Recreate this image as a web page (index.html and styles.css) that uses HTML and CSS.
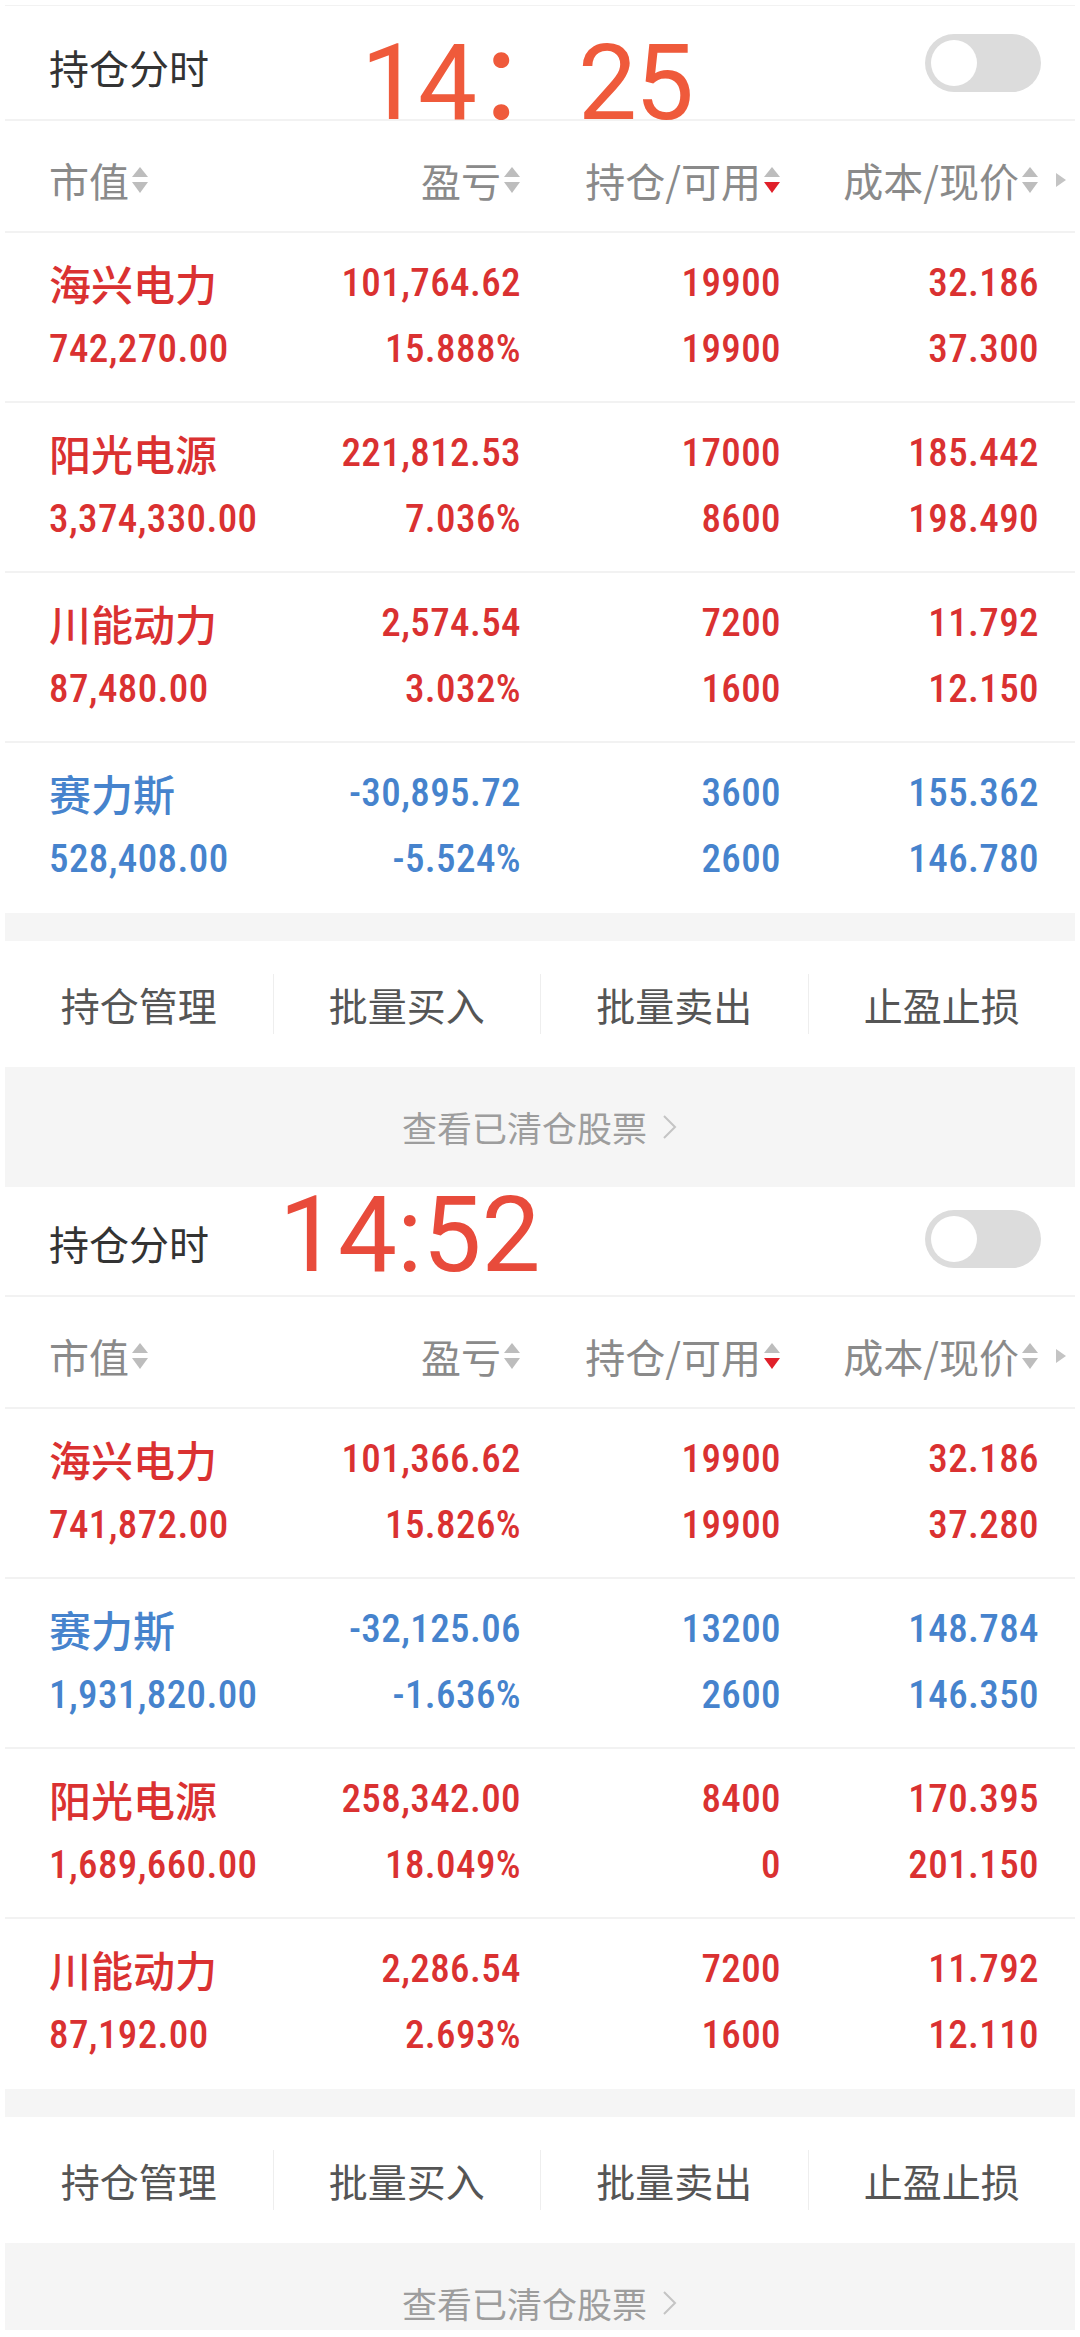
FILE: index.html
```html
<!DOCTYPE html>
<html lang="zh-CN">
<head>
  <meta charset="UTF-8" />
  <title>持仓分时</title>
  <link rel="stylesheet" href="styles.css">
</head>
<body>
<div class="page">
  <div class="edge"></div>

  <!-- first snapshot -->
  <section class="panel">
    <div class="bar">
      <span class="title">持仓分时</span>
      <div class="toggle"><span class="knob"></span></div>
    </div>
    <div class="stamp stamp-a">14：25</div>

    <div class="thead">
      <div class="th">市值<svg class="sort" viewBox="0 0 18 28"><path d="M1 11 L9 1 L17 11 Z" /><path d="M1 16 L17 16 L9 27 Z" /></svg></div>
      <div class="th r">盈亏<svg class="sort" viewBox="0 0 18 28"><path d="M1 11 L9 1 L17 11 Z" /><path d="M1 16 L17 16 L9 27 Z" /></svg></div>
      <div class="th r">持仓/可用<svg class="sort" viewBox="0 0 18 28"><path d="M1 11 L9 1 L17 11 Z" /><path class="on" d="M1 16 L17 16 L9 27 Z" /></svg></div>
      <div class="th r">成本/现价<svg class="sort" viewBox="0 0 18 28"><path d="M1 11 L9 1 L17 11 Z" /><path d="M1 16 L17 16 L9 27 Z" /></svg></div>
      <div class="th more"><svg class="tri" viewBox="0 0 12 16"><path d="M1 1 L11 8 L1 15 Z" /></svg></div>
    </div>

    <div class="row up">
      <div class="cell left"><span class="name">海兴电力</span><span>742,270.00</span></div>
      <div class="cell"><span>101,764.62</span><span>15.888%</span></div>
      <div class="cell"><span>19900</span><span>19900</span></div>
      <div class="cell"><span>32.186</span><span>37.300</span></div>
    </div>
    <div class="row up">
      <div class="cell left"><span class="name">阳光电源</span><span>3,374,330.00</span></div>
      <div class="cell"><span>221,812.53</span><span>7.036%</span></div>
      <div class="cell"><span>17000</span><span>8600</span></div>
      <div class="cell"><span>185.442</span><span>198.490</span></div>
    </div>
    <div class="row up">
      <div class="cell left"><span class="name">川能动力</span><span>87,480.00</span></div>
      <div class="cell"><span>2,574.54</span><span>3.032%</span></div>
      <div class="cell"><span>7200</span><span>1600</span></div>
      <div class="cell"><span>11.792</span><span>12.150</span></div>
    </div>
    <div class="row down last">
      <div class="cell left"><span class="name">赛力斯</span><span>528,408.00</span></div>
      <div class="cell"><span>-30,895.72</span><span>-5.524%</span></div>
      <div class="cell"><span>3600</span><span>2600</span></div>
      <div class="cell"><span>155.362</span><span>146.780</span></div>
    </div>

    <div class="gap"></div>
    <div class="actions">
      <div class="act">持仓管理</div>
      <div class="act">批量买入</div>
      <div class="act">批量卖出</div>
      <div class="act">止盈止损</div>
    </div>
    <div class="cleared">查看已清仓股票<svg class="chev" viewBox="0 0 17 26"><path d="M3 2 L14 13 L3 24" /></svg></div>
  </section>

  <!-- second snapshot -->
  <section class="panel">
    <div class="bar">
      <span class="title">持仓分时</span>
      <div class="toggle"><span class="knob"></span></div>
    </div>
    <div class="stamp stamp-b">14:52</div>

    <div class="thead">
      <div class="th">市值<svg class="sort" viewBox="0 0 18 28"><path d="M1 11 L9 1 L17 11 Z" /><path d="M1 16 L17 16 L9 27 Z" /></svg></div>
      <div class="th r">盈亏<svg class="sort" viewBox="0 0 18 28"><path d="M1 11 L9 1 L17 11 Z" /><path d="M1 16 L17 16 L9 27 Z" /></svg></div>
      <div class="th r">持仓/可用<svg class="sort" viewBox="0 0 18 28"><path d="M1 11 L9 1 L17 11 Z" /><path class="on" d="M1 16 L17 16 L9 27 Z" /></svg></div>
      <div class="th r">成本/现价<svg class="sort" viewBox="0 0 18 28"><path d="M1 11 L9 1 L17 11 Z" /><path d="M1 16 L17 16 L9 27 Z" /></svg></div>
      <div class="th more"><svg class="tri" viewBox="0 0 12 16"><path d="M1 1 L11 8 L1 15 Z" /></svg></div>
    </div>

    <div class="row up">
      <div class="cell left"><span class="name">海兴电力</span><span>741,872.00</span></div>
      <div class="cell"><span>101,366.62</span><span>15.826%</span></div>
      <div class="cell"><span>19900</span><span>19900</span></div>
      <div class="cell"><span>32.186</span><span>37.280</span></div>
    </div>
    <div class="row down">
      <div class="cell left"><span class="name">赛力斯</span><span>1,931,820.00</span></div>
      <div class="cell"><span>-32,125.06</span><span>-1.636%</span></div>
      <div class="cell"><span>13200</span><span>2600</span></div>
      <div class="cell"><span>148.784</span><span>146.350</span></div>
    </div>
    <div class="row up">
      <div class="cell left"><span class="name">阳光电源</span><span>1,689,660.00</span></div>
      <div class="cell"><span>258,342.00</span><span>18.049%</span></div>
      <div class="cell"><span>8400</span><span>0</span></div>
      <div class="cell"><span>170.395</span><span>201.150</span></div>
    </div>
    <div class="row up last">
      <div class="cell left"><span class="name">川能动力</span><span>87,192.00</span></div>
      <div class="cell"><span>2,286.54</span><span>2.693%</span></div>
      <div class="cell"><span>7200</span><span>1600</span></div>
      <div class="cell"><span>11.792</span><span>12.110</span></div>
    </div>

    <div class="gap"></div>
    <div class="actions">
      <div class="act">持仓管理</div>
      <div class="act">批量买入</div>
      <div class="act">批量卖出</div>
      <div class="act">止盈止损</div>
    </div>
    <div class="cleared cut">查看已清仓股票<svg class="chev" viewBox="0 0 17 26"><path d="M3 2 L14 13 L3 24" /></svg></div>
  </section>
</div>
</body>
</html>
```

FILE: styles.css
```css
* {
  box-sizing: border-box;
}
body {
  margin: 0;
  background: #fff;
  font-family: "Noto Sans CJK SC", sans-serif;
}
.page {
  width: 1080px;
  padding: 0 5px 7px;
}
.edge {
  height: 6px;
  border-bottom: 1px solid #f2f2f2;
  margin-bottom: 5px;
}
.panel {
  position: relative;
}

/* top bar */
.bar {
  height: 110px;
  border-bottom: 2px solid #f2f2f2;
  display: flex;
  align-items: center;
  justify-content: space-between;
  padding: 0 34px 0 44px;
}
.title {
  font-size: 40px;
  line-height: 1;
  color: #333;
  margin-top: 3px;
}
.toggle {
  width: 116px;
  height: 58px;
  border-radius: 29px;
  background: #dcdcdc;
  padding: 6px;
  display: flex;
  margin-bottom: 4px;
}
.knob {
  width: 46px;
  height: 46px;
  border-radius: 50%;
  background: #fff;
}
.stamp {
  position: absolute;
  font-family: Roboto, "Noto Sans CJK SC", sans-serif;
  font-size: 105px;
  line-height: 1;
}
.stamp-a {
  left: 356px;
  top: 20px;
  color: #ef5a3b;
  letter-spacing: -2px;
}
.stamp-b {
  left: 274px;
  top: -4px;
  color: #e84b3b;
}

/* table */
.thead, .row {
  display: grid;
  grid-template-columns: 232px 240px 260px 258px 36px;
  padding-left: 44px;
  border-bottom: 2px solid #f2f2f2;
}
.thead {
  height: 112px;
  padding-top: 8px;
  align-items: center;
}
.th {
  display: flex;
  align-items: center;
  gap: 2px;
  font-size: 40px;
  line-height: 1;
  color: #8a8a8a;
}
.th.r {
  justify-content: flex-end;
}
.th.more {
  padding-left: 16px;
}
.sort {
  width: 18px;
  height: 28px;
  fill: #bdbdbd;
}
.sort .on {
  fill: #e0202a;
}
.tri {
  width: 12px;
  height: 16px;
  fill: #c4c4c4;
}
.row {
  height: 170px;
  padding-top: 17px;
  font-family: "Roboto Condensed", "Liberation Sans Narrow", Roboto, sans-serif;
  font-size: 39px;
  font-weight: 500;
  letter-spacing: 0.4px;
}
.row.last {
  border-bottom-color: transparent;
}
.up {
  color: #da3131;
}
.down {
  color: #4683cd;
}
.cell {
  display: flex;
  flex-direction: column;
  align-items: flex-end;
  line-height: 66px;
  white-space: nowrap;
}
.cell.left {
  align-items: flex-start;
}
.name {
  font-family: "Noto Sans CJK SC", sans-serif;
  font-size: 42px;
  font-weight: 500;
  letter-spacing: 0;
}

/* bottom */
.gap {
  height: 28px;
  background: #f5f5f5;
}
.actions {
  height: 126px;
  display: grid;
  grid-template-columns: repeat(4, 1fr);
  align-items: center;
}
.act {
  height: 60px;
  line-height: 60px;
  text-align: center;
  font-size: 39px;
  color: #555;
  border-left: 1px solid #eee;
}
.act:first-child {
  border-left: none;
}
.cleared {
  height: 120px;
  background: #f5f5f5;
  display: flex;
  justify-content: center;
  align-items: flex-start;
  gap: 14px;
  padding-top: 35px;
  font-size: 35px;
  line-height: 50px;
  color: #9d9d9d;
}
.cleared.cut {
  height: 87px;
  overflow: hidden;
}
.chev {
  width: 17px;
  height: 26px;
  margin-top: 12px;
  fill: none;
  stroke: #c4c4c4;
  stroke-width: 2;
}
```
